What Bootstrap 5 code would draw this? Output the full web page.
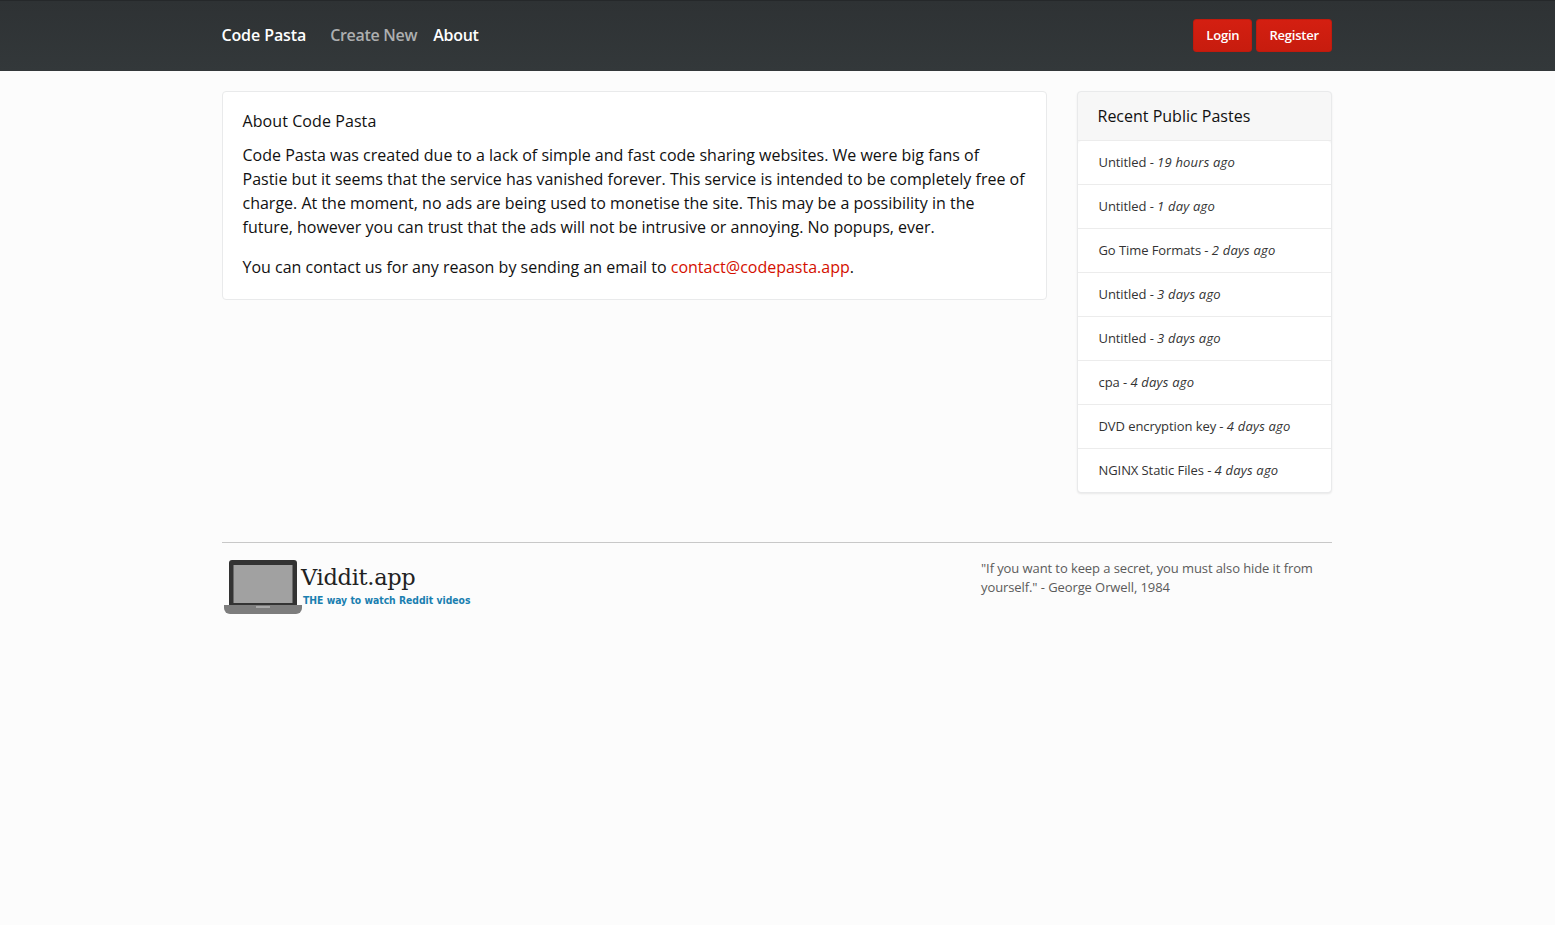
<!DOCTYPE html>
<html lang="en"><head><meta charset="utf-8"><title>About Code Pasta</title>
<link href="https://cdn.jsdelivr.net/npm/bootstrap@5.3.0/dist/css/bootstrap.min.css" rel="stylesheet">
<style>
body{background:#fcfcfc;font-family:"Open Sans",sans-serif;font-size:16px;line-height:24px;color:#111}
.wrap-main{width:1140px;margin-left:calc(50% - 570.5px);margin-right:0;padding:0 15px}
.top-bar{height:71px;background:linear-gradient(#2e3234,#33383a);border-top:1px solid #25282a;padding:0;display:block}
.top-bar .wrap-main{height:69px}
.nav-left{margin:-2px 0 0 -.6px}
.top-bar .navbar-brand{font-size:16px;font-weight:600;color:#fff;padding:0;margin-right:24px;line-height:24px;letter-spacing:-.1px}
.top-bar .nav-link{font-size:16px;font-weight:600;padding:0;line-height:24px;color:#fff;letter-spacing:-.3px}
.top-bar .nav-link.dim{color:#adafb0}
.red-btn{background:linear-gradient(#d41f11,#c71c0e);border:1px solid #c01a0d;color:#fff;font-size:13px;font-weight:600;padding:0 12px;height:33px;line-height:31px;border-radius:3px;letter-spacing:-.2px}
.red-btn:hover{color:#fff;background:#c01a0d}
.main-row{--bs-gutter-x:30px;margin-top:20px}
.col-left{width:855px;flex:none}
.col-right{width:285px;flex:none}
.about-card{border:1px solid #e9eaeb;border-radius:4px;background:#fff;padding:17px 20px 19px 19.5px;height:209px}
.about-title{font-size:16px;font-weight:400;line-height:24px;margin:0 0 10px;letter-spacing:.08px}
.about-card p{margin:0 0 16px}
.about-card p:last-child{margin:0}
.about-card a{color:#d40f00;text-decoration:none}
.side-card{border:1px solid #e9eaeb;border-radius:4px;background:#f7f7f7;box-shadow:0 1px 2px rgba(0,0,0,.08)}
.side-head{height:49px;padding:0 19.500px;line-height:48px;font-size:16px;color:#111;border-bottom:1px solid #ececec}
.side-list .list-group-item{height:44px;padding:0 20.5px;line-height:43px;font-size:13px;color:#333;border-color:#ececec;border-left:0;border-right:0;background:#fff;letter-spacing:-.08px}
.side-list .list-group-item em{letter-spacing:.2px}
.side-list .list-group-item:first-child{border-top:0;border-radius:4px 4px 0 0}
.side-list .list-group-item:last-child{border-bottom:0;border-radius:0 0 4px 4px;height:43px}
.foot{margin-top:49px;border-top:1px solid #c8c8c8;padding-top:15px}
.promo{width:250px;height:58px;display:flex;text-decoration:none}
.promo svg{display:block;flex:none;margin:0 0 0 2px}
.promo-name{font-family:"DejaVu Serif",serif;font-size:22.500px;line-height:26px;color:#222;letter-spacing:-.3px;display:block;margin:6px 0 0 -1px}
.promo-tag{font-family:"DejaVu Sans Condensed","DejaVu Sans",sans-serif;font-stretch:condensed;font-weight:700;font-size:10.300px;line-height:14px;color:#1a7fb0;display:block;margin:3px 0 0 1px;white-space:nowrap}
.quote{width:351px;font-size:13px;line-height:19px;color:#5b5b5b;margin-top:1px;letter-spacing:-.09px}
</style></head>
<body>
<nav class="navbar top-bar">
  <div class="wrap-main d-flex align-items-center">
    <div class="nav-left d-flex align-items-center">
      <a class="navbar-brand" href="#">Code Pasta</a>
      <div class="d-flex gap-3">
        <a class="nav-link dim" href="#">Create New</a>
        <a class="nav-link" href="#">About</a>
      </div>
    </div>
    <div class="ms-auto d-flex gap-1">
      <a class="btn red-btn" href="#">Login</a>
      <a class="btn red-btn" href="#">Register</a>
    </div>
  </div>
</nav>
<div class="wrap-main">
  <div class="row main-row">
    <div class="col-left">
      <div class="about-card">
        <h1 class="about-title">About Code Pasta</h1>
        <p>Code Pasta was created due to a lack of simple and fast code sharing websites. We were big fans of Pastie but it seems that the service has vanished forever. This service is intended to be completely free of charge. At the moment, no ads are being used to monetise the site. This may be a possibility in the future, however you can trust that the ads will not be intrusive or annoying. No popups, ever.</p>
        <p>You can contact us for any reason by sending an email to <a href="#">contact@codepasta.app</a>.</p>
      </div>
    </div>
    <div class="col-right">
      <div class="side-card">
        <div class="side-head">Recent Public Pastes</div>
        <div class="list-group list-group-flush side-list">
          <a href="#" class="list-group-item">Untitled - <em>19 hours ago</em></a>
          <a href="#" class="list-group-item">Untitled - <em>1 day ago</em></a>
          <a href="#" class="list-group-item">Go Time Formats - <em>2 days ago</em></a>
          <a href="#" class="list-group-item">Untitled - <em>3 days ago</em></a>
          <a href="#" class="list-group-item">Untitled - <em>3 days ago</em></a>
          <a href="#" class="list-group-item">cpa - <em>4 days ago</em></a>
          <a href="#" class="list-group-item">DVD encryption key - <em>4 days ago</em></a>
          <a href="#" class="list-group-item">NGINX Static Files - <em>4 days ago</em></a>
        </div>
      </div>
    </div>
  </div>
  <div class="foot d-flex justify-content-between">
    <a class="promo" href="#">
      <svg width="78" height="57" viewBox="0 0 78 57">
        <path d="M5 47V5a3 3 0 0 1 3-3h62a3 3 0 0 1 3 3v42z" fill="#333"/>
        <rect x="9.500" y="7" width="59" height="38" fill="#a1a1a1"/>
        <path d="M0 47h78v3a6 6 0 0 1-6 6H6a6 6 0 0 1-6-6z" fill="#7d7d7d"/>
        <rect x="32" y="48" width="14" height="2" fill="#a8a8a8"/>
      </svg>
      <span><span class="promo-name">Viddit.app</span><span class="promo-tag">THE way to watch Reddit videos</span></span>
    </a>
    <div class="quote">"If you want to keep a secret, you must also hide it from yourself." - George Orwell, 1984</div>
  </div>
</div>
<script src="https://cdn.jsdelivr.net/npm/bootstrap@5.3.0/dist/js/bootstrap.bundle.min.js"></script>
</body></html>
